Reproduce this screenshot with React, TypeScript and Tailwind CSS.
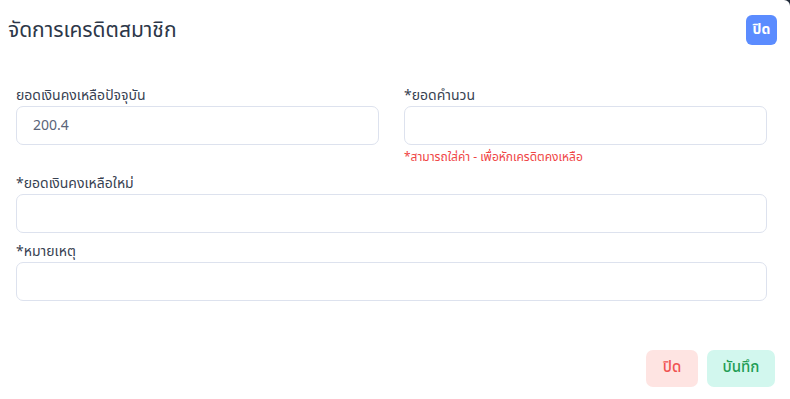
import React from "react";

const font = { fontFamily: '"Noto Sans Thai", "Noto Sans", "Liberation Sans", sans-serif' };

function Field({ label, value, help }: { label: string; value?: string; help?: string }) {
  return (
    <div className="flex flex-col">
      <label className="text-[14px] leading-[18px] text-[#374151] mb-[1px]">{label}</label>
      <div className="h-[39px] rounded-[7px] border border-[#dde2ee] bg-white flex items-center px-[16px] text-[14px] text-[#5a6478]">
        {value}
      </div>
      {help && <div className="text-[12px] leading-[16px] text-[#ef4444] mt-[4px]">{help}</div>}
    </div>
  );
}

export default function App() {
  return (
    <div className="w-[790px] h-[399px] bg-[#1f2937] overflow-hidden" style={font}>
      <div className="w-full h-full bg-white rounded-tr-[6px] flex flex-col">
        <div className="flex items-center justify-between pl-[8px] pr-[13px] h-[59px] pt-[2px]">
          <h1 className="text-[21px] text-[#2d3748] font-normal leading-[28px]">จัดการเครดิตสมาชิก</h1>
          <button className="w-[31px] h-[30px] rounded-[6px] bg-[#5b8cff] text-white text-[14px] font-bold flex items-center justify-center -mt-[2px]">
            ปิด
          </button>
        </div>
        <div className="pl-[16px] pr-[23px] pt-[28px] flex flex-col">
          <div className="grid grid-cols-2 gap-x-[25px]">
            <Field label="ยอดเงินคงเหลือปัจจุบัน" value="200.4" />
            <Field label="*ยอดคำนวน" help="*สามารถใส่ค่า - เพื่อหักเครดิตคงเหลือ" />
          </div>
          <div className="mt-[10px]">
            <Field label="*ยอดเงินคงเหลือใหม่" />
          </div>
          <div className="mt-[10px]">
            <Field label="*หมายเหตุ" />
          </div>
        </div>
        <div className="flex justify-end gap-[9px] pr-[15px] mt-[49px]">
          <button className="w-[52px] h-[37px] rounded-[7px] bg-[#fee4e2] text-[#f05252] text-[15px] font-medium">ปิด</button>
          <button className="w-[68px] h-[37px] rounded-[7px] bg-[#d2f7ee] text-[#1f9d55] text-[15px] font-medium">บันทึก</button>
        </div>
      </div>
    </div>
  );
}
